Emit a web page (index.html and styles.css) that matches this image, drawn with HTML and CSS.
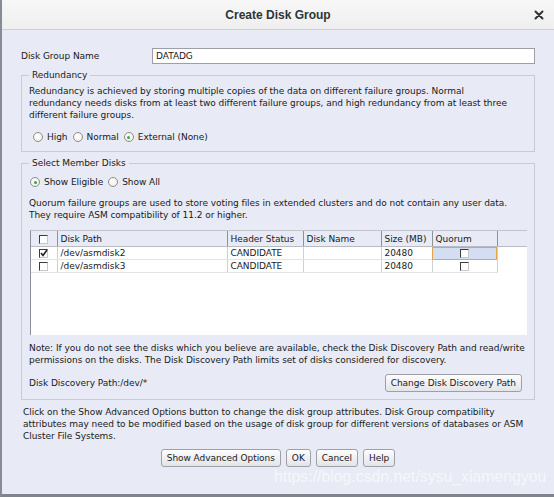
FILE: index.html
```html
<!DOCTYPE html>
<html>
<head>
<meta charset="utf-8">
<link rel="stylesheet" href="styles.css">
</head>
<body>
<div class="dialog">
  <div class="titlebar">
    <span class="title">Create Disk Group</span>
    <svg class="close" width="10" height="10" viewBox="0 0 10 10"><path d="M1.5 1.5 L8.5 8.5 M8.5 1.5 L1.5 8.5" stroke="#2e3436" stroke-width="2" stroke-linecap="round"/></svg>
  </div>
  <div class="content">
    <div class="name-row">
      <span class="name-label">Disk Group Name</span>
      <div class="textbox">DATADG</div>
    </div>

    <fieldset class="group redundancy">
      <legend>Redundancy</legend>
      <p class="text red-text">Redundancy is achieved by storing multiple copies of the data on different failure groups. Normal redundancy needs disks from at least two different failure groups, and high redundancy from at least three different failure groups.</p>
      <div class="radios r-red">
        <span class="opt"><span class="radio"></span>High</span>
        <span class="opt"><span class="radio"></span>Normal</span>
        <span class="opt"><span class="radio on"></span>External (None)</span>
      </div>
    </fieldset>

    <fieldset class="group member">
      <legend>Select Member Disks</legend>
      <div class="radios r-mem">
        <span class="opt"><span class="radio on"></span>Show Eligible</span>
        <span class="opt"><span class="radio"></span>Show All</span>
      </div>
      <p class="text quorum">Quorum failure groups are used to store voting files in extended clusters and do not contain any user data. They require ASM compatibility of 11.2 or higher.</p>
      <div class="tablebox">
        <table class="disks">
          <colgroup>
            <col class="c-chk"><col class="c-path"><col class="c-hs"><col class="c-dn"><col class="c-size"><col class="c-q"><col class="c-fill">
          </colgroup>
          <thead>
            <tr>
              <th class="ctr"><span class="cb"></span></th>
              <th>Disk Path</th>
              <th>Header Status</th>
              <th>Disk Name</th>
              <th>Size (MB)</th>
              <th>Quorum</th>
              <th class="filler"></th>
            </tr>
          </thead>
          <tbody>
            <tr>
              <td class="ctr"><span class="cb"><svg width="9" height="9" viewBox="0 0 9 9"><path d="M2 4 L4 6.5 L8 1" stroke="#222" stroke-width="1.6" fill="none"/></svg></span></td>
              <td>/dev/asmdisk2</td>
              <td>CANDIDATE</td>
              <td></td>
              <td>20480</td>
              <td class="ctr sel"><span class="cb"></span></td>
              <td class="filler"></td>
            </tr>
            <tr>
              <td class="ctr"><span class="cb"></span></td>
              <td>/dev/asmdisk3</td>
              <td>CANDIDATE</td>
              <td></td>
              <td>20480</td>
              <td class="ctr"><span class="cb"></span></td>
              <td class="filler"></td>
            </tr>
          </tbody>
        </table>
      </div>
      <p class="text note">Note: If you do not see the disks which you believe are available, check the Disk Discovery Path and read/write permissions on the disks. The Disk Discovery Path limits set of disks considered for discovery.</p>
      <div class="path-row">
        <span>Disk Discovery Path:/dev/*</span>
        <button class="btn">Change Disk Discovery Path</button>
      </div>
    </fieldset>

    <p class="text advanced">Click on the Show Advanced Options button to change the disk group attributes. Disk Group compatibility attributes may need to be modified based on the usage of disk group for different versions of databases or ASM Cluster File Systems.</p>

    <div class="buttons">
      <button class="btn">Show Advanced Options</button>
      <button class="btn">OK</button>
      <button class="btn">Cancel</button>
      <button class="btn">Help</button>
    </div>
    <div class="watermark">https://blog.csdn.net/sysu_xiamengyou</div>
  </div>
</div>
</body>
</html>
```

FILE: styles.css
```css
html, body {
  margin: 0;
  padding: 0;
}
body {
  width: 554px;
  height: 497px;
  overflow: hidden;
  background: #e8ebf5;
  font-family: "DejaVu Sans", sans-serif;
  font-size: 9px;
  letter-spacing: -0.05px;
  color: #1a1a1a;
}
.dialog {
  width: 552px;
  height: 494px;
  border-left: 2px solid #868b94;
  border-bottom: 3px solid #7f848d;
  background: #e8ebf5;
  position: relative;
}
.titlebar {
  height: 29px;
  border-bottom: 1px solid #cfd0d3;
  background: linear-gradient(#f7f7f7, #efefef);
  display: flex;
  align-items: center;
  justify-content: center;
  position: relative;
}
.title {
  font-family: "Liberation Sans", Arial, sans-serif;
  font-weight: bold;
  font-size: 12px;
  letter-spacing: 0;
  color: #2e3436;
}
.close {
  position: absolute;
  right: 10px;
  top: 10px;
}
.content {
  padding: 18px 19px 0 19px;
}
.name-row {
  display: flex;
  align-items: center;
  height: 16px;
}
.name-label {
  width: 131px;
}
.textbox {
  flex: 1;
  height: 16px;
  box-sizing: border-box;
  background: #fff;
  border: 1px solid #9c9fa6;
  padding-left: 3px;
  line-height: 14px;
}
.group {
  margin: 5px 0 0 0;
  border: 1px solid #c9cbd1;
  padding: 4px 7px 7px 7px;
  min-width: 0;
}
.group legend {
  padding: 0 3px;
  line-height: 12px;
  margin-left: 0;
}
.text {
  margin: 0;
  line-height: 12px;
}
.red-text {
  max-width: 486px;
}
.radios {
  display: flex;
  align-items: center;
  height: 14px;
  gap: 5px;
}
.r-red {
  margin-top: 9px;
  padding-left: 4px;
}
.r-mem {
  margin-top: 2px;
  padding-left: 1px;
}
.opt {
  display: inline-flex;
  align-items: center;
  gap: 4px;
}
.radio {
  width: 10px;
  height: 10px;
  box-sizing: border-box;
  border-radius: 50%;
  border: 1px solid #8d8d88;
  background: radial-gradient(circle at 40% 35%, #ffffff, #ecebe2);
  position: relative;
}
.radio.on::after {
  content: "";
  position: absolute;
  left: 2.5px;
  top: 2.5px;
  width: 3px;
  height: 3px;
  border-radius: 50%;
  background: #3aa93e;
}
.quorum {
  margin-top: 8px;
}
.tablebox {
  margin: 9px 0 0 1px;
  width: 497px;
  height: 105px;
  box-sizing: border-box;
  background: #fff;
  border-top: 1px solid #c3c5ca;
  border-left: 1px solid #8e9096;
}
.disks {
  border-collapse: collapse;
  table-layout: fixed;
  width: 496px;
}
.c-chk { width: 26px; }
.c-path { width: 170px; }
.c-hs { width: 76px; }
.c-dn { width: 78px; }
.c-size { width: 51px; }
.c-q { width: 65px; }
.c-fill { width: 30px; }
.disks th {
  height: 15px;
  font-weight: normal;
  text-align: left;
  padding: 0 3px;
  background: #e8ebf5;
  border-right: 1px solid #8f9198;
  border-bottom: 1px solid #b9bbc2;
  line-height: 14px;
  white-space: nowrap;
}
.disks th.filler {
  border-right: none;
}
.disks td {
  height: 12px;
  padding: 0 3px;
  line-height: 12px;
  border-right: 1px solid #cfd0d4;
  border-bottom: 1px solid #e2e3e6;
  white-space: nowrap;
}
.disks td.filler {
  border: none;
}
.disks .ctr {
  text-align: center;
  padding: 0;
}
.disks td.sel {
  background: #d3def2;
  outline: 1px solid #e3a44a;
  outline-offset: -1px;
}
.cb {
  display: inline-block;
  width: 9px;
  height: 9px;
  box-sizing: border-box;
  background: #fff;
  border-top: 1px solid #3c3c3c;
  border-left: 1px solid #3c3c3c;
  border-right: 1px solid #c8c8c8;
  border-bottom: 1px solid #c8c8c8;
  vertical-align: middle;
  position: relative;
}
.cb svg {
  position: absolute;
  left: -1px;
  top: -1px;
}
.note {
  margin-top: 7px;
}
.path-row {
  margin-top: 8px;
  margin-right: 5px;
  display: flex;
  align-items: center;
  justify-content: space-between;
}
.btn {
  font-family: "DejaVu Sans", sans-serif;
  font-size: 9px;
  letter-spacing: -0.05px;
  color: #1a1a1a;
  height: 18px;
  padding: 0 5px;
  border: 1px solid #9ea0a6;
  border-radius: 3px;
  background: linear-gradient(#fdfdfd, #e3e4e8);
  line-height: 16px;
  margin: 0;
}
.advanced {
  margin-top: 6px;
  padding-left: 2px;
}
.buttons {
  margin-top: 7px;
  display: flex;
  justify-content: center;
  gap: 5px;
}
.watermark {
  position: absolute;
  left: 272px;
  top: 468px;
  font-family: "Liberation Sans", Arial, sans-serif;
  font-size: 15.8px;
  letter-spacing: 0;
  color: rgba(255, 255, 255, 0.6);
  white-space: nowrap;
}
```
